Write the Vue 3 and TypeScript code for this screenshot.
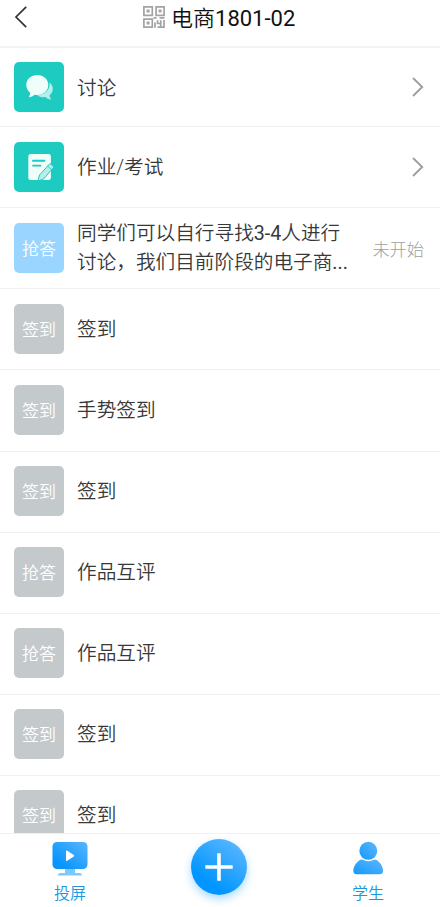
<script setup lang="ts">
interface Activity {
  id: number
  badge: string
  title: string
  tone: 'blue' | 'grey'
  status?: string
}

const activities: Activity[] = [
  { id: 1, badge: '抢答', title: '同学们可以自行寻找3-4人进行讨论，我们目前阶段的电子商...', tone: 'blue', status: '未开始' },
  { id: 2, badge: '签到', title: '签到', tone: 'grey' },
  { id: 3, badge: '签到', title: '手势签到', tone: 'grey' },
  { id: 4, badge: '签到', title: '签到', tone: 'grey' },
  { id: 5, badge: '抢答', title: '作品互评', tone: 'grey' },
  { id: 6, badge: '抢答', title: '作品互评', tone: 'grey' },
  { id: 7, badge: '签到', title: '签到', tone: 'grey' },
  { id: 8, badge: '签到', title: '签到', tone: 'grey' },
]

// Latin runs are set in regular weight beside the lighter Chinese text.
function runs(text: string): { text: string; latin: boolean }[] {
  return text
    .split(/([\x20-\x7e]+)/)
    .filter((part) => part !== '')
    .map((part) => ({ text: part, latin: /^[\x20-\x7e]/.test(part) }))
}
</script>

<template>
  <div class="screen">
    <header class="header">
      <svg class="back" width="14" height="24" viewBox="0 0 14 24" fill="none" stroke="#333" stroke-width="1.7">
        <path d="M12.2 1.8 2 12l10.2 10.2" />
      </svg>
      <h1 class="title">
        <svg class="qr" width="22" height="22" viewBox="0 0 22 22" fill="none" stroke="#a3a3a3" stroke-width="1.7">
          <path d="M.9.9h8.400v8.400H.9zM13.100.9h8v8.400h-8zM.9 13.100h8.400v8H.9z" />
          <path d="M3.600 3.600h3v3h-3zM15.600 3.600h3v3h-3zM3.600 15.600h3v3h-3z" fill="#a3a3a3" stroke="none" />
          <path d="M10.500 11.900h3M16.500 11.900h5M12 16.400v5.400M14.500 14.200v3.300h3.300v-3.300M21 14v7.100h-6.500M17.700 18.200v3" />
        </svg>
        <span>电商<span class="latin">1801-02</span></span>
      </h1>
    </header>

    <main class="list">
      <section class="row row-first">
        <div class="tile teal">
          <svg width="50" height="50" viewBox="0 0 50 50">
            <path d="M35.500 20.300c4.800 4.300 4 10.300 0 13 .2 1.600.7 2.800 1.900 4.500-3-.3-4.600-1.200-5.900-2.700-3.200.5-6-.2-8-1.900 8-.6 13-5.700 12-12.900z" fill="#b4f0eb" />
            <path d="M23.300 13c6.200 0 11 4.300 11 10s-4.800 10-11 10c-1 0-1.800-.1-2.700-.3-1.700 1.500-3.700 2.400-6 2.500 1.100-1.400 1.600-2.900 1.600-4.500-2.400-1.900-3.900-4.500-3.900-7.700 0-5.700 4.800-10 11-10z" fill="#effdfb" />
          </svg>
        </div>
        <p class="name">讨论</p>
        <svg class="arrow" width="14" height="22" viewBox="0 0 14 22" fill="none" stroke="#a0a0a0" stroke-width="2">
          <path d="m2 2 9.200 9L2 20" />
        </svg>
      </section>

      <section class="row">
        <div class="tile teal">
          <svg width="50" height="50" viewBox="0 0 50 50">
            <rect x="14.300" y="12" width="22.600" height="26" rx="2.500" fill="#effdfb" />
            <path d="M19 18.800h11.500M19 23.600h7.500" stroke="#1dcbc0" stroke-width="1.900" stroke-linecap="round" />
            <path d="m25.500 33 10.500-11.500 4 3.500-10.500 12-5.500 2z" fill="#b4f0eb" stroke="#1dcbc0" stroke-width="1" stroke-linejoin="round" />
            <path d="m33.500 24 4 3.500" stroke="#1dcbc0" stroke-width=".9" />
          </svg>
        </div>
        <p class="name">作业/考试</p>
        <svg class="arrow" width="14" height="22" viewBox="0 0 14 22" fill="none" stroke="#a0a0a0" stroke-width="2">
          <path d="m2 2 9.200 9L2 20" />
        </svg>
      </section>

      <section v-for="item in activities" :key="item.id" class="row">
        <div class="tile" :class="item.tone">{{ item.badge }}</div>
        <p class="name">
          <span v-for="(run, i) in runs(item.title)" :key="i" :class="{ latin: run.latin }">{{ run.text }}</span>
        </p>
        <span v-if="item.status" class="status">{{ item.status }}</span>
      </section>
    </main>

    <nav class="tabs">
      <div class="tab">
        <svg width="36" height="36" viewBox="0 0 36 36">
          <defs>
            <linearGradient id="screen-fill" x1="0" y1="1" x2="1" y2="0">
              <stop offset=".2" stop-color="#0796fc" />
              <stop offset="1" stop-color="#5ab6ff" />
            </linearGradient>
          </defs>
          <path d="M13 28h10v4h5q1.500 0 2 2.500H5.500Q6.500 32 8 32h5z" fill="#7cc8ff" />
          <rect x=".5" y="1" width="35" height="27" rx="4.500" fill="url(#screen-fill)" />
          <path d="M14 10.500v8.500q0 1.500 1.300.7l6.500-4.200q1-.8 0-1.600l-6.500-4.200q-1.300-.7-1.300.8z" fill="#fff" />
        </svg>
        <span>投屏</span>
      </div>
      <button class="add" type="button">
        <svg width="28" height="28" viewBox="0 0 28 28" stroke="#fff" stroke-width="3.600">
          <path d="M14 .3v27.400M.3 14h27.400" />
        </svg>
      </button>
      <div class="tab">
        <svg width="36" height="36" viewBox="0 0 36 36">
          <defs>
            <linearGradient id="person-fill" x1="0" y1="1" x2="1" y2="0">
              <stop offset="0" stop-color="#1598fb" />
              <stop offset="1" stop-color="#5db8ff" />
            </linearGradient>
          </defs>
          <circle cx="18.300" cy="9.800" r="9" fill="url(#person-fill)" />
          <path d="M10.500 18.800q1.500-.6 3 .3 4.800 2.500 9.600 0 1.500-.9 3-.3c4 2 6.700 6.500 7 10.700q.1 3.700-3.500 3.700H6.800q-3.600 0-3.500-3.700c.4-4.200 3.200-8.700 7.200-10.700z" fill="url(#person-fill)" />
        </svg>
        <span>学生</span>
      </div>
    </nav>
  </div>
</template>

<style>
body {
  margin: 0;
  background: #fff;
}
</style>

<style scoped>
.screen {
  display: flex;
  flex-direction: column;
  height: 907px;
  overflow: hidden;
  background: #fff;
  color: #383838;
  font-family: Roboto, "Noto Sans CJK SC", sans-serif;
}

.header {
  box-sizing: border-box;
  display: flex;
  flex: none;
  align-items: flex-start;
  height: 48px;
  padding: 5px 14px 0;
  border-bottom: 2px solid #f3f3f3;
}

.back {
  flex: none;
}

.title {
  display: flex;
  flex: 1;
  gap: 6px;
  margin: 0;
  padding-left: 115px;
  color: #111;
  font-size: 22px;
  font-weight: 350;
  line-height: 27px;
}

.qr {
  padding-top: 1px;
}

.latin {
  font-weight: 400;
}

.list {
  flex: 1;
  min-height: 0;
  overflow: hidden;
}

.row {
  box-sizing: border-box;
  display: flex;
  align-items: center;
  height: 81.1px;
  padding: 0 16px 0 14px;
  border-bottom: 1px solid #f0f0f0;
}

.row-first {
  height: 79.2px;
}

.row-first .name {
  padding-top: 2px;
}

.tile {
  box-sizing: border-box;
  display: flex;
  flex: none;
  align-items: center;
  justify-content: center;
  width: 50px;
  height: 50px;
  border-radius: 5px;
  color: #fff;
  font-size: 17px;
  font-weight: 350;
}

.teal {
  background: #1dcbc0;
}

.blue {
  background: #99d5ff;
}

.grey {
  background: #c4c9cc;
}

.blue,
.grey {
  margin-top: -1px;
  padding-bottom: 1px;
}

.name {
  flex: 1;
  max-width: 276px;
  margin: 0 auto 0 13px;
  font-size: 19.65px;
  font-weight: 350;
  line-height: 29px;
}

.arrow {
  flex: none;
  margin-right: -1px;
}

.status {
  flex: none;
  color: #a0a0a0;
  font-size: 17.2px;
  font-weight: 300;
}

.tabs {
  box-sizing: border-box;
  display: flex;
  flex: none;
  align-items: flex-start;
  justify-content: space-between;
  height: 74px;
  padding: 5px 54px 0 52px;
  border-top: 1px solid #f0f0f0;
  background: #fff;
}

.tab {
  display: flex;
  flex-direction: column;
  gap: 5px;
  align-items: center;
  width: 36px;
  padding-top: 2px;
  color: #1a98e2;
  font-size: 16px;
  font-weight: 350;
  line-height: 24px;
  white-space: nowrap;
}

.add {
  display: flex;
  align-items: center;
  justify-content: center;
  width: 56px;
  height: 56px;
  padding: 0;
  border: 0;
  border-radius: 50%;
  background: linear-gradient(35deg, #0095ff 25%, #60b9ff 95%);
  box-shadow: 0 4px 8px rgb(64 178 255 / 45%);
}
</style>
